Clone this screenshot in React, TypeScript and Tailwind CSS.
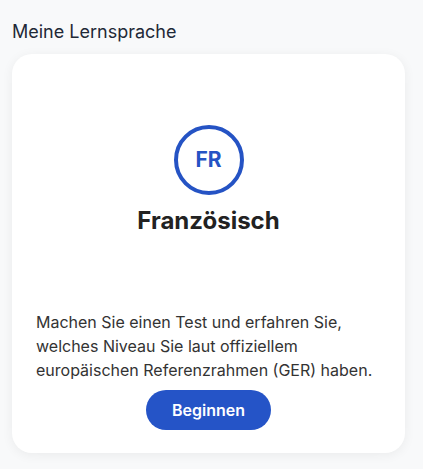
export default function App() {
  return (
    <div
      className="min-h-[469px] bg-[#f8f9fa] px-3 pt-[20px]"
      style={{ fontFamily: 'Inter, "Noto Sans", sans-serif' }}
    >
      <h2 className="text-[18px] leading-[24px] text-[#1f2937]">Meine Lernsprache</h2>

      <div className="mt-[10px] w-[393px] h-[399px] bg-white rounded-[20px] shadow-[0_2px_12px_rgba(0,0,0,0.06)] flex flex-col items-center px-6">
        <div className="mt-[71px] w-[70px] h-[70px] rounded-full border-[4px] border-[#2553c4] flex items-center justify-center">
          <span className="text-[21px] font-bold text-[#2553c4]">FR</span>
        </div>
        <h3 className="mt-[10px] text-[24px] leading-[32px] font-bold text-[#222]">Französisch</h3>

        <p className="mt-[73px] self-start text-[16px] leading-[24px] text-[#333]">
          Machen Sie einen Test und erfahren Sie, welches Niveau Sie laut offiziellem
          europäischen Referenzrahmen (GER) haben.
        </p>

        <button className="mt-[8px] w-[125px] h-[40px] rounded-full bg-[#2554c7] text-white text-[16px] font-semibold">
          Beginnen
        </button>
      </div>
    </div>
  );
}
